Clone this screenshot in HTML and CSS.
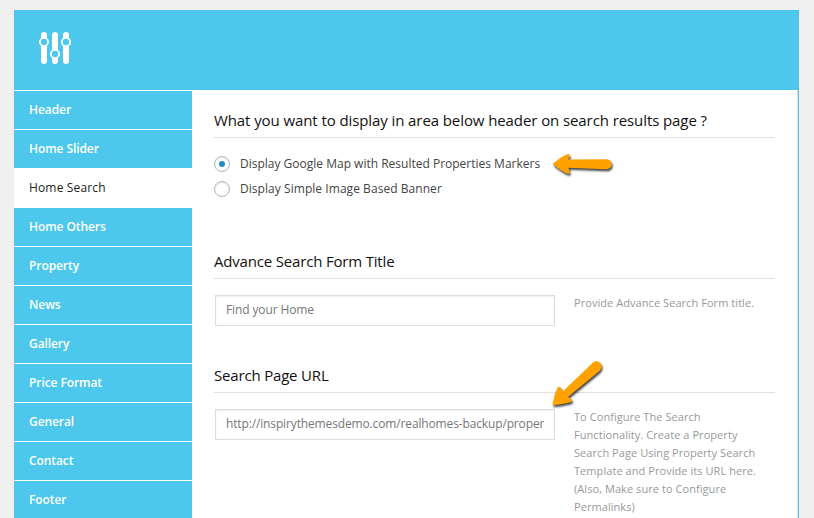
FILE: index.html
```html
<!DOCTYPE html>
<html lang="en">
<head>
<meta charset="utf-8">
<title>Theme Options</title>
<link rel="stylesheet" href="styles.css">
</head>
<body>
<div class="panel">
  <header class="panel-header">
    <svg class="logo" width="34" height="34" viewBox="0 0 34 34">
      <g fill="#fff">
        <rect x="3" y="1" width="6" height="32" rx="3"/>
        <rect x="14" y="1" width="6" height="32" rx="3"/>
        <rect x="25" y="1" width="6" height="32" rx="3"/>
      </g>
      <g fill="#4ec7ec" stroke="#fff" stroke-width="1.800">
        <circle cx="6" cy="11" r="4.100"/>
        <circle cx="17" cy="23" r="4.100"/>
        <circle cx="28" cy="11" r="4.100"/>
      </g>
    </svg>
  </header>
  <div class="panel-body">
    <nav class="tabs">
      <a class="tab">Header</a>
      <a class="tab">Home Slider</a>
      <a class="tab active">Home Search</a>
      <a class="tab">Home Others</a>
      <a class="tab">Property</a>
      <a class="tab">News</a>
      <a class="tab">Gallery</a>
      <a class="tab">Price Format</a>
      <a class="tab">General</a>
      <a class="tab">Contact</a>
      <a class="tab">Footer</a>
    </nav>
    <main class="content">
      <section class="section section-radio">
        <h3 class="heading heading-long">What you want to display in area below header on search results page ?</h3>
        <div class="choices">
          <div class="choice"><span class="radio checked"></span><span>Display Google Map with Resulted Properties Markers</span></div>
          <div class="choice"><span class="radio"></span><span class="label-banner">Display Simple Image Based Banner</span></div>
        </div>
      </section>
      <section class="section">
        <h3 class="heading">Advance Search Form Title</h3>
        <div class="field">
          <div class="input"><span class="value">Find your Home</span></div>
          <p class="hint">Provide Advance Search Form title.</p>
        </div>
      </section>
      <section class="section">
        <h3 class="heading">Search Page URL</h3>
        <div class="field">
          <div class="input"><span class="value value-url">http://inspirythemesdemo.com/realhomes-backup/proper</span></div>
          <p class="hint">To Configure The Search<br>Functionality. Create a Property<br>Search Page Using Property Search<br>Template and Provide its URL here.<br>(Also, Make sure to Configure<br>Permalinks)</p>
        </div>
      </section>
    </main>
  </div>
</div>
<svg class="arrow arrow-map" width="70" height="32" viewBox="548 148 70 32">
  <path fill="#ffa200" d="M552.7 164 Q561 156.500 567.500 154.200 Q570.500 153.500 569.500 156.500 L568.300 159.600 L606 159.200 C613.500 159.200 613.500 169.200 606 169.200 L568.300 167.800 L569.500 171.500 Q570.500 174.500 567.500 173.700 Q561 171 552.700 164Z"/>
</svg>
<svg class="arrow arrow-url" width="64" height="56" viewBox="546 356 64 56">
  <path fill="#ffa200" d="M552.500 405.300 Q554.500 393.500 557.800 387.300 Q560 385.500 561.500 389 L562.800 391.500 L592.500 363 C598 358 605 365.500 599.500 371 L568 397 L571.300 399 Q573.500 401.500 569.500 402.600 Q561 404.500 552.500 405.300Z"/>
</svg>
</body>
</html>
```
FILE: styles.css
```css
* { box-sizing: border-box; }

body {
  margin: 0;
  height: 518px;
  overflow: hidden;
  background: #f0f0f0;
  font-family: "Open Sans", sans-serif;
}

.panel {
  width: 785px;
  margin: 10px 0 0 14px;
}

.panel-header {
  height: 80px;
  padding: 21px 0 0 24px;
  background: #4ec7ec;
}

.logo { display: block; }

.panel-body {
  display: flex;
  height: 440px;
  background: #fff;
  border-right: 1px solid #4ec7ec;
}

.tabs {
  flex: none;
  width: 178px;
  padding-top: 1px;
}

.tab {
  display: block;
  height: 39px;
  padding-left: 15px;
  border-bottom: 1px solid #fff;
  background: #4ec7ec;
  color: #fff;
  font-size: 12px;
  font-weight: 600;
  letter-spacing: -.08px;
  line-height: 37px;
}

.tab.active {
  background: #fff;
  color: #222;
  font-weight: 400;
  letter-spacing: .15px;
}

.content {
  flex: 1;
  padding: 17px 22px 0 22px;
  border-right: 1px solid #dfdfdf;
}

.section { height: 114px; }
.section-radio { height: 141px; }

.heading {
  height: 31px;
  margin: 0;
  border-bottom: 1px solid #dfdfdf;
  color: #111;
  font-size: 15px;
  font-weight: 400;
  letter-spacing: -.18px;
  line-height: 27px;
  white-space: nowrap;
}

.heading-long { letter-spacing: -.09px; }

.choices { padding-top: 13px; }

.choice {
  display: flex;
  align-items: center;
  gap: 10px;
  height: 25px;
  color: #444;
  font-size: 12px;
  white-space: nowrap;
}

.label-banner { letter-spacing: .05px; }

.radio {
  display: flex;
  align-items: center;
  justify-content: center;
  width: 16px;
  height: 16px;
  border: 1px solid #b4b4b4;
  border-radius: 50%;
  background: #fff;
  box-shadow: inset 0 1px 2px rgba(0, 0, 0, .1);
}

.radio.checked::before {
  content: "";
  width: 6px;
  height: 6px;
  border-radius: 50%;
  background: #1e8cbe;
}

.field {
  display: flex;
  gap: 19px;
  padding: 16px 0 0 1px;
}

.input {
  flex: none;
  width: 340px;
  height: 31px;
  padding: 0 10px;
  border: 1px solid #ddd;
  background: #fff;
  box-shadow: inset 0 1px 2px rgba(0, 0, 0, .07);
}

.value {
  display: block;
  overflow: hidden;
  color: #777;
  font-size: 12px;
  letter-spacing: -.12px;
  line-height: 28px;
  white-space: nowrap;
}

.value-url { letter-spacing: -.14px; }

.hint {
  margin: -1px 0 0;
  color: #999;
  font-size: 11px;
  letter-spacing: .06px;
  line-height: 18px;
  white-space: nowrap;
}

.arrow {
  position: absolute;
  filter: drop-shadow(1.5px 2px 1px rgba(0, 0, 0, .75));
}

.arrow-map { left: 548px; top: 148px; }
.arrow-url { left: 546px; top: 356px; }
```
